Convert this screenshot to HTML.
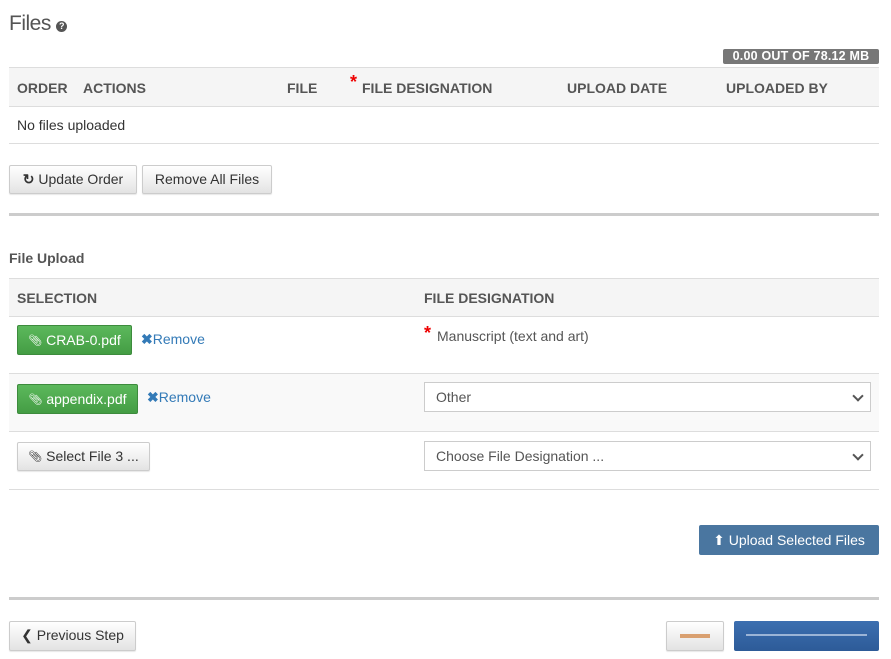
<!DOCTYPE html>
<html><head><meta charset="utf-8"><style>
*{box-sizing:border-box;margin:0;padding:0}
body{width:891px;height:659px;background:#fff;font-family:"Liberation Sans",sans-serif;color:#555;position:relative;overflow:hidden}
.a{position:absolute}
.hdr{background:#f5f5f5;border-top:1px solid #ddd;border-bottom:1px solid #ddd}
.th{position:absolute;font-size:14px;font-weight:bold;color:#555;top:1px;line-height:38px}
.btn{position:absolute;height:29px;border:1px solid #ccc;border-radius:2px;background:linear-gradient(#fff,#e3e3e3);font-size:14px;color:#333;line-height:27px;text-align:center;box-shadow:0 1px 1px rgba(0,0,0,.1)}
.gbtn{position:absolute;height:30px;border:1px solid #3d8b3d;border-radius:2px;background:linear-gradient(#5cb85c,#449d44);color:#fff;font-size:14px;line-height:28px;text-align:center}
.clip{font-size:11px;vertical-align:1px}
.rm{position:absolute;font-size:14px;color:#337ab7}
.sel{position:absolute;left:424px;width:447px;height:30px;border:1px solid #ccc;background:#fff;font-size:14px;color:#555;line-height:28px;padding-left:11px}
.sel:after{content:"";position:absolute;right:8px;top:9px;width:6px;height:6px;border-right:2px solid #555;border-bottom:2px solid #555;transform:rotate(45deg)}
.line{position:absolute;left:9px;width:870px;height:1px;background:#ddd}
.hr{position:absolute;left:9px;width:870px;height:3px;background:#ccc}
</style></head><body>
<div class="a" style="left:9px;top:12px;font-size:21px;color:#555;letter-spacing:-0.5px">Files <span style="display:inline-block;width:11px;height:11px;border-radius:50%;background:#555;color:#fff;font-size:9px;line-height:11px;text-align:center;font-weight:bold;vertical-align:1px;letter-spacing:0">?</span></div>
<div class="a" style="left:723px;top:49px;width:156px;height:15px;background:#777;border-radius:2px;color:#fff;font-size:12.5px;font-weight:bold;line-height:15px;text-align:center;letter-spacing:0.2px">0.00 OUT OF 78.12 MB</div>
<div class="a hdr" style="left:9px;top:67px;width:870px;height:40px">
<span class="th" style="left:8px">ORDER</span><span class="th" style="left:74px">ACTIONS</span><span class="th" style="left:278px">FILE</span><span class="th" style="left:341px;color:#e00;top:-5px;font-size:18px">*</span><span class="th" style="left:353px">FILE DESIGNATION</span><span class="th" style="left:558px">UPLOAD DATE</span><span class="th" style="left:717px">UPLOADED BY</span></div>
<div class="a" style="left:17px;top:117px;font-size:14px;color:#333">No files uploaded</div>
<div class="line" style="top:143px"></div>
<div class="btn" style="left:9px;top:165px;width:128px"><b>&#x21bb;</b> Update Order</div>
<div class="btn" style="left:142px;top:165px;width:130px">Remove All Files</div>
<div class="hr" style="top:213px"></div>
<div class="a" style="left:9px;top:250px;font-size:14px;font-weight:bold;color:#555">File Upload</div>
<div class="a hdr" style="left:9px;top:278px;width:870px;height:39px"><span class="th" style="left:8px;top:0">SELECTION</span><span class="th" style="left:415px;top:0">FILE DESIGNATION</span></div>
<div class="gbtn" style="left:17px;top:325px;width:115px"><span class="clip">&#x1F4CE;&#xFE0E;</span> CRAB-0.pdf</div>
<div class="rm" style="left:141px;top:331px"><b>&#x2716;</b>Remove</div>
<div class="a" style="left:424px;top:323px;color:#e00;font-size:18px;font-weight:bold">*</div>
<div class="a" style="left:437px;top:328px;font-size:14px;color:#555">Manuscript (text and art)</div>
<div class="a" style="left:9px;top:373px;width:870px;height:59px;background:#f9f9f9;border-top:1px solid #ddd;border-bottom:1px solid #ddd"></div>
<div class="gbtn" style="left:17px;top:384px;width:121px"><span class="clip">&#x1F4CE;&#xFE0E;</span> appendix.pdf</div>
<div class="rm" style="left:147px;top:389px"><b>&#x2716;</b>Remove</div>
<div class="sel" style="top:382px">Other</div>
<div class="btn" style="left:17px;top:442px;width:133px;height:29px"><span class="clip">&#x1F4CE;&#xFE0E;</span> Select File 3 ...</div>
<div class="sel" style="top:441px">Choose File Designation ...</div>
<div class="line" style="top:489px"></div>
<div class="a" style="left:699px;top:525px;width:180px;height:30px;background:#4a76a0;border-radius:2px;color:#fff;font-size:14px;line-height:30px;text-align:center">&#x2B06; Upload Selected Files</div>
<div class="hr" style="top:597px"></div>
<div class="btn" style="left:9px;top:621px;width:127px;height:30px">&#x276E; Previous Step</div>
<div class="btn" style="left:666px;top:621px;width:58px;height:30px"><span style="display:inline-block;width:30px;height:4px;background:#d9a070;vertical-align:middle"></span></div>
<div class="a" style="left:734px;top:621px;width:145px;height:30px;background:linear-gradient(#3c6fb0,#2d5b98);border-radius:2px"><div style="margin:13px 12px 0;height:2px;background:#9bb4d6"></div></div>
</body></html>
